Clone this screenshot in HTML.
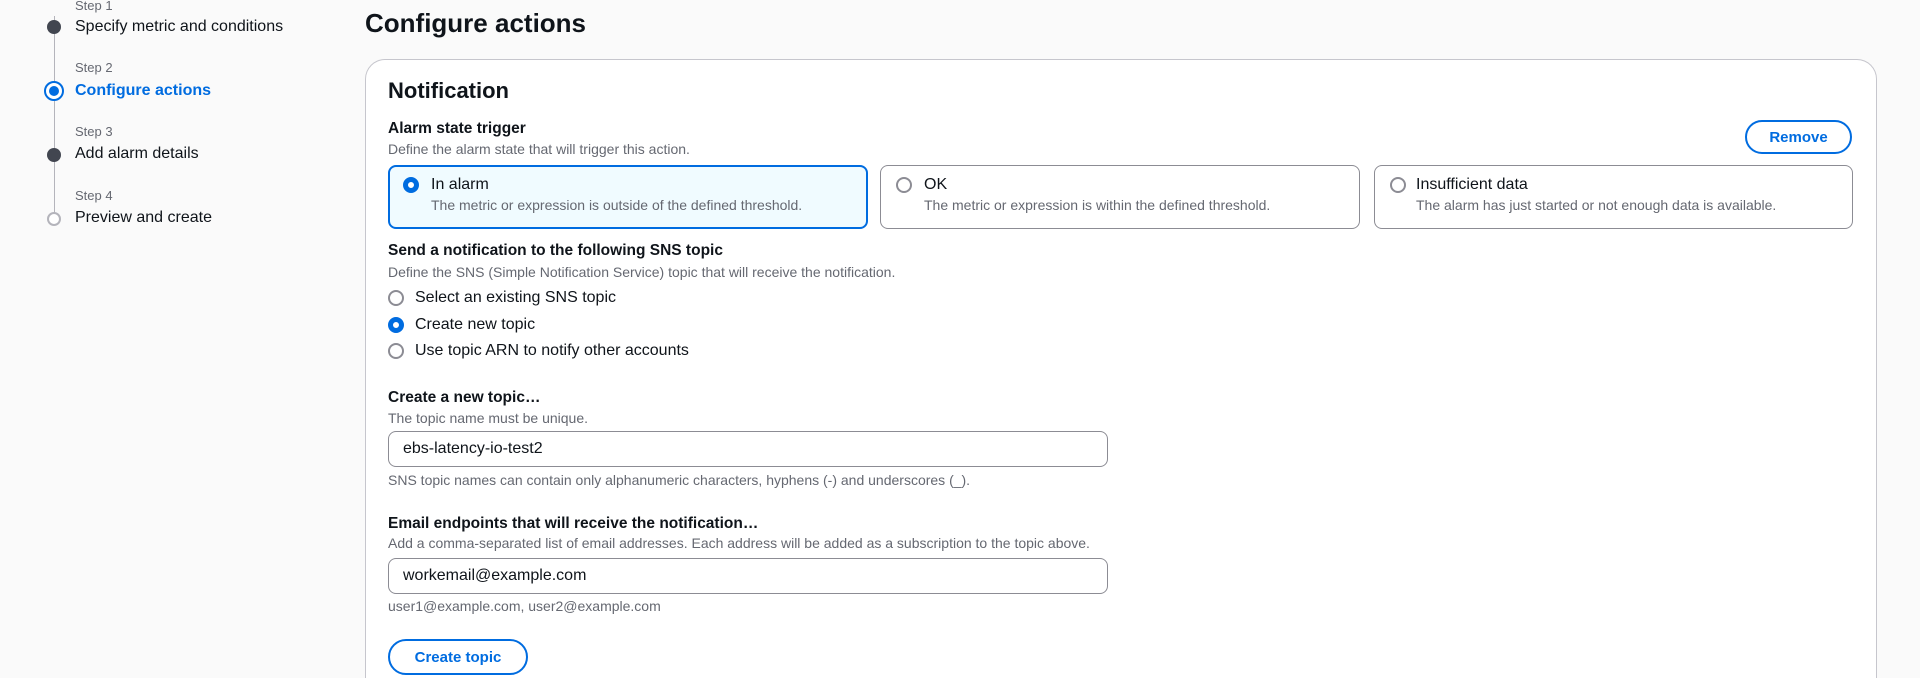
<!DOCTYPE html>
<html><head><meta charset="utf-8"><style>
*{box-sizing:border-box;margin:0;padding:0}
html{width:1920px;height:678px;overflow:hidden}
body{width:1920px;height:678px;overflow:hidden;background:#fafafa;font-family:"Liberation Sans",sans-serif;color:#0f141a;position:relative}
.a{position:absolute;white-space:nowrap}
.lbl{font-size:13px;color:#656871}
.st{font-size:16px;color:#0f141a}
.dot{position:absolute;left:47px;width:14px;height:14px;border-radius:50%}
.b{font-weight:bold;font-size:15.5px}
.d{font-size:14px;color:#656871}
.r{position:absolute;width:16px;height:16px;border-radius:50%;border:2px solid #8c8c94;background:#fff}
.r.on{border:5px solid #006ce0}
.t{font-size:16px}
.tile{position:absolute;top:165px;height:64px;border:1px solid #8c8c94;border-radius:8px;background:#fff}
.inp{position:absolute;left:388px;width:720px;height:36px;border:1px solid #8c8c94;border-radius:8px;background:#fff;font-size:16px;padding:8px 14px}
.btn{position:absolute;border:2px solid #006ce0;border-radius:20px;color:#006ce0;font-weight:bold;font-size:15px;display:flex;align-items:center;justify-content:center;background:#fff}
</style></head><body>
<div class="a" style="left:54px;top:16px;width:1px;height:200px;border-left:1px solid #b4b4bb"></div>
<div class="a lbl" style="left:75px;top:-2px">Step 1</div>
<div class="dot" style="top:20px;background:#424650"></div>
<div class="a st" style="left:75px;top:18px">Specify metric and conditions</div>
<div class="a lbl" style="left:75px;top:60px">Step 2</div>
<div class="dot" style="left:44px;top:81px;width:20px;height:20px;border:2px solid #006ce0;background:#fff"></div>
<div class="dot" style="left:49px;top:86px;width:10px;height:10px;background:#006ce0"></div>
<div class="a st" style="left:75px;top:82px;color:#006ce0;font-weight:bold">Configure actions</div>
<div class="a lbl" style="left:75px;top:124px">Step 3</div>
<div class="dot" style="top:148px;background:#424650"></div>
<div class="a st" style="left:75px;top:145px">Add alarm details</div>
<div class="a lbl" style="left:75px;top:188px">Step 4</div>
<div class="dot" style="top:212px;background:#fff;border:2px solid #b4b4bb"></div>
<div class="a st" style="left:75px;top:209px">Preview and create</div>

<div class="a" style="left:365px;top:8px;font-size:26px;font-weight:bold">Configure actions</div>
<div class="a" style="left:365px;top:59px;width:1512px;height:619px;border:1px solid #c6c6cd;border-bottom:none;border-radius:20px 20px 0 0;background:#fff"></div>
<div class="a" style="left:388px;top:78px;font-size:22px;font-weight:bold">Notification</div>
<div class="a b" style="left:388px;top:120px">Alarm state trigger</div>
<div class="a d" style="left:388px;top:141px">Define the alarm state that will trigger this action.</div>
<div class="btn" style="left:1745px;top:120px;width:107px;height:34px">Remove</div>

<div class="tile" style="left:388px;width:480px;border:2px solid #006ce0;background:#f0fbff"></div>
<div class="r on" style="left:403px;top:177px"></div>
<div class="a t" style="left:431px;top:176px">In alarm</div>
<div class="a d" style="left:431px;top:197px">The metric or expression is outside of the defined threshold.</div>
<div class="tile" style="left:880px;width:480px"></div>
<div class="r" style="left:896px;top:177px"></div>
<div class="a t" style="left:924px;top:176px">OK</div>
<div class="a d" style="left:924px;top:197px">The metric or expression is within the defined threshold.</div>
<div class="tile" style="left:1374px;width:479px"></div>
<div class="r" style="left:1390px;top:177px"></div>
<div class="a t" style="left:1416px;top:176px">Insufficient data</div>
<div class="a d" style="left:1416px;top:197px">The alarm has just started or not enough data is available.</div>

<div class="a b" style="left:388px;top:242px">Send a notification to the following SNS topic</div>
<div class="a d" style="left:388px;top:264px">Define the SNS (Simple Notification Service) topic that will receive the notification.</div>
<div class="r" style="left:388px;top:290px"></div><div class="a t" style="left:415px;top:289px">Select an existing SNS topic</div>
<div class="r on" style="left:388px;top:317px"></div><div class="a t" style="left:415px;top:316px">Create new topic</div>
<div class="r" style="left:388px;top:343px"></div><div class="a t" style="left:415px;top:342px">Use topic ARN to notify other accounts</div>

<div class="a b" style="left:388px;top:389px">Create a new topic…</div>
<div class="a d" style="left:388px;top:410px">The topic name must be unique.</div>
<div class="inp" style="top:431px">ebs-latency-io-test2</div>
<div class="a d" style="left:388px;top:472px">SNS topic names can contain only alphanumeric characters, hyphens (-) and underscores (_).</div>
<div class="a b" style="left:388px;top:515px">Email endpoints that will receive the notification…</div>
<div class="a d" style="left:388px;top:535px">Add a comma-separated list of email addresses. Each address will be added as a subscription to the topic above.</div>
<div class="inp" style="top:558px">workemail@example.com</div>
<div class="a d" style="left:388px;top:598px">user1@example.com, user2@example.com</div>
<div class="btn" style="left:388px;top:639px;width:140px;height:36px">Create topic</div>
</body></html>
